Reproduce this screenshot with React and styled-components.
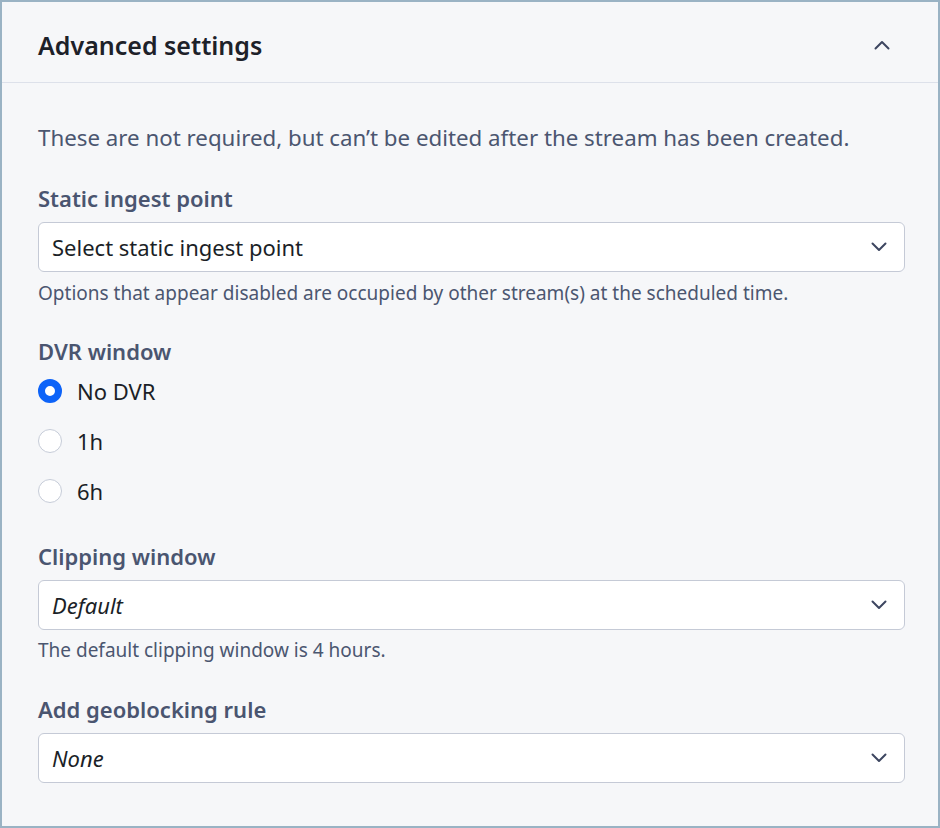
import React, { useState } from 'react'
import styled, { createGlobalStyle } from 'styled-components'

const GlobalStyle = createGlobalStyle`
  html, body {
    margin: 0;
    padding: 0;
    background: #f6f7f9;
  }
  * {
    box-sizing: border-box;
  }
`

const Panel = styled.div`
  width: 940px;
  height: 828px;
  border: 2px solid #9ab3c4;
  background: #f6f7f9;
  font-family: "Noto Sans", "Open Sans", sans-serif;
  color: #1b1f27;
  overflow: hidden;
`

const Header = styled.div`
  height: 81px;
  display: flex;
  align-items: center;
  justify-content: space-between;
  padding: 6px 44px 0 36px;
  border-bottom: 1px solid #dde1ea;
`

const Title = styled.h2`
  margin: 0;
  font-size: 25px;
  line-height: 34px;
  font-weight: 600;
  color: #1d2129;
`

const IconButton = styled.button`
  border: none;
  background: none;
  padding: 0;
  width: 24px;
  height: 24px;
  display: flex;
  align-items: center;
  justify-content: center;
  color: #3d4660;
  cursor: pointer;
`

const Body = styled.div`
  padding: 39px 33px 0 36px;
`

const Description = styled.p`
  margin: 0;
  font-size: 22.3px;
  line-height: 32px;
  color: #4b5670;
`

const Section = styled.div`
  margin-top: ${(p) => p.$top}px;
  display: flex;
  flex-direction: column;
`

const Label = styled.label`
  font-size: 22px;
  line-height: 28px;
  font-weight: 600;
  color: #4a5570;
`

const SelectBox = styled.div`
  margin-top: 10px;
  height: 50px;
  background: #fff;
  border: 1px solid #c5cad6;
  border-radius: 6px;
  display: flex;
  align-items: center;
  justify-content: space-between;
  padding: 0 17px 0 13px;
  font-size: 22px;
  font-style: ${(p) => (p.$italic ? 'italic' : 'normal')};
  color: #1b1f27;
  cursor: pointer;
`

const Help = styled.div`
  margin-top: ${(p) => p.$top || 8}px;
  font-size: 19px;
  line-height: 26px;
  color: #4b5670;
`

const RadioGroup = styled.div`
  margin-top: 11px;
  display: flex;
  flex-direction: column;
  gap: 20px;
`

const RadioRow = styled.label`
  height: 30px;
  display: flex;
  align-items: center;
  gap: 15px;
  font-size: 22px;
  color: #1b1f27;
  cursor: pointer;
`

const Dot = styled.span`
  width: 24px;
  height: 24px;
  border-radius: 50%;
  background: #fff;
  border: ${(p) => (p.$checked ? '7px solid #0d63f8' : '1px solid #c6ccd8')};
  flex-shrink: 0;
`

const Chevron = ({ up }) => (
  <svg width="16" height="10" viewBox="0 0 16 10" fill="none">
    <path
      d={up ? 'M1.5 8.5 L8 2 L14.5 8.5' : 'M1.5 1.5 L8 8 L14.5 1.5'}
      stroke="currentColor"
      strokeWidth="2"
      strokeLinecap="round"
      strokeLinejoin="round"
    />
  </svg>
)

const Select = ({ value, italic }) => (
  <SelectBox $italic={italic}>
    <span>{value}</span>
    <span style={{ color: '#3d4660', display: 'flex' }}>
      <Chevron />
    </span>
  </SelectBox>
)

const dvrOptions = ['No DVR', '1h', '6h']

function App() {
  const [dvr, setDvr] = useState('No DVR')

  return (
    <>
      <GlobalStyle />
      <Panel>
        <Header>
          <Title>Advanced settings</Title>
          <IconButton>
            <Chevron up />
          </IconButton>
        </Header>

        <Body>
          <Description>
            These are not required, but can’t be edited after the stream has been created.
          </Description>

          <Section $top={30}>
            <Label>Static ingest point</Label>
            <Select value="Select static ingest point" />
            <Help>Options that appear disabled are occupied by other stream(s) at the scheduled time.</Help>
          </Section>

          <Section $top={31}>
            <Label>DVR window</Label>
            <RadioGroup>
              {dvrOptions.map((opt) => (
                <RadioRow key={opt} onClick={() => setDvr(opt)}>
                  <Dot $checked={dvr === opt} />
                  {opt}
                </RadioRow>
              ))}
            </RadioGroup>
          </Section>

          <Section $top={36}>
            <Label>Clipping window</Label>
            <Select value="Default" italic />
            <Help $top={7}>The default clipping window is 4 hours.</Help>
          </Section>

          <Section $top={32}>
            <Label>Add geoblocking rule</Label>
            <Select value="None" italic />
          </Section>
        </Body>
      </Panel>
    </>
  )
}

export default App
